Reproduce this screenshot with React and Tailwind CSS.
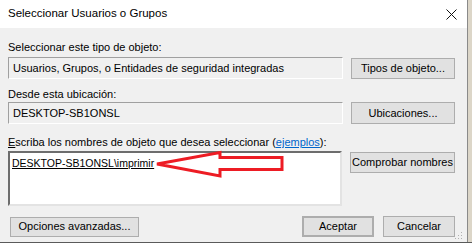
import React from "react";

function Btn({ children, className = "" }) {
  return (
    <div
      className={`flex items-center justify-center whitespace-nowrap border border-[#adadad] bg-[#e1e1e1] text-[11px] text-black ${className}`}
    >
      {children}
    </div>
  );
}

export default function App() {
  return (
    <div
      className="relative w-[472px] h-[248px] overflow-hidden bg-[#dcd6c8]"
      style={{ fontFamily: '"Liberation Sans", Arial, sans-serif' }}
    >
      <div className="flex h-[242px] w-[468px] flex-col border-r border-[#8a8a8a] bg-[#f0f0f0]">
        {/* title bar */}
        <div className="flex h-[28px] items-center justify-between bg-white pl-[8px] pr-[10px]">
          <span className="text-[11.5px] text-black">Seleccionar Usuarios o Grupos</span>
          <svg width="11" height="11" viewBox="0 0 11 11">
            <path d="M0.5 0.5 L10.5 10.5 M10.5 0.5 L0.5 10.5" stroke="#111" strokeWidth="1" />
          </svg>
        </div>

        <div className="flex flex-col pl-[8px] text-[11px]">
          <div className="mt-[12px] h-[15px] leading-[15px] text-black">
            Seleccionar este tipo de objeto:
          </div>
          <div className="mt-[2px] flex items-center gap-[8px]">
            <div className="flex h-[22px] w-[335px] items-center border border-t-[#a0a0a0] border-l-[#a0a0a0] border-r-white border-b-white pl-[4px] text-black">
              Usuarios, Grupos, o Entidades de seguridad integradas
            </div>
            <Btn className="h-[21px] w-[104px]">Tipos de objeto...</Btn>
          </div>

          <div className="mt-[8px] h-[15px] leading-[15px] text-black">
            Desde esta ubicación:
          </div>
          <div className="flex items-center gap-[8px]">
            <div className="flex h-[22px] w-[335px] items-center border border-t-[#a0a0a0] border-l-[#a0a0a0] border-r-white border-b-white pl-[4px] text-black">
              DESKTOP-SB1ONSL
            </div>
            <Btn className="h-[22px] w-[104px]">Ubicaciones...</Btn>
          </div>

          <div className="mt-[11px] h-[15px] leading-[15px] text-black">
            <span className="underline">E</span>scriba los nombres de objeto que desea seleccionar (
            <span className="text-[#0066cc] underline">ejemplos</span>):
          </div>
          <div className="mt-[1px] flex items-start gap-[8px]">
            <div className="h-[55px] w-[334px] border-2 border-t-[#6d6d6d] border-l-[#6d6d6d] border-r-[#e3e3e3] border-b-[#e3e3e3] bg-white pl-[2px] pt-[2px]">
              <span className="text-[10.5px] text-black underline">DESKTOP-SB1ONSL\imprimir</span>
            </div>
            <Btn className="mt-[1px] h-[21px] w-[105px]">Comprobar nombres</Btn>
          </div>

          <div className="mt-[10px] flex items-center">
            <Btn className="ml-[2px] h-[20px] w-[129px]">Opciones avanzadas...</Btn>
            <Btn className="ml-[163px] h-[21px] w-[72px] border-2 border-[#0078d7]">Aceptar</Btn>
            <Btn className="ml-[9px] h-[21px] w-[72px]">Cancelar</Btn>
          </div>
        </div>
        <div className="relative flex-1">
          <svg className="absolute right-[4px] bottom-[2px]" width="9" height="9" viewBox="0 0 9 9">
            <rect x="7" y="1" width="1" height="1" fill="#b0b0b0" />
            <rect x="4" y="4" width="1" height="1" fill="#b0b0b0" />
            <rect x="7" y="4" width="1" height="1" fill="#b0b0b0" />
            <rect x="1" y="7" width="1" height="1" fill="#b0b0b0" />
            <rect x="4" y="7" width="1" height="1" fill="#b0b0b0" />
            <rect x="7" y="7" width="1" height="1" fill="#b0b0b0" />
          </svg>
        </div>
      </div>
      <div className="h-[6px] w-full border-t border-[#5a5a5a] bg-white" />

      {/* red annotation arrow */}
      <svg className="absolute left-0 top-0" width="472" height="248" viewBox="0 0 472 248">
        <polygon
          points="157,164 220,152.5 220,157.5 282,157.5 282,169.5 220,169.5 220,176"
          fill="none"
          stroke="#ed1c24"
          strokeWidth="3"
          strokeLinejoin="miter"
        />
      </svg>
    </div>
  );
}
